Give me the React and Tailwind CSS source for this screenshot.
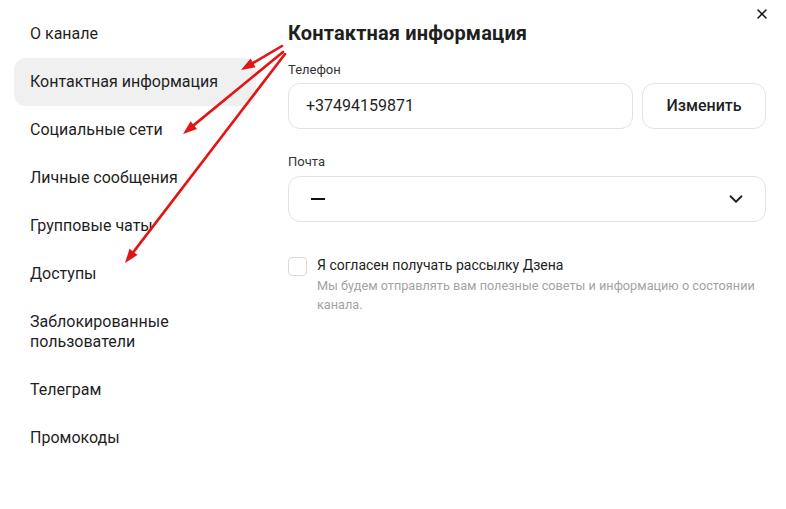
import { X, ChevronDown } from 'lucide-react'

const NAV = [
  'О канале',
  'Контактная информация',
  'Социальные сети',
  'Личные сообщения',
  'Групповые чаты',
  'Доступы',
  'Заблокированные пользователи',
  'Телеграм',
  'Промокоды',
]

const ACTIVE = 'Контактная информация'

// annotation arrows drawn over the page: [x1, y1, x2, y2]
const ARROWS = [
  [282, 46, 241, 70],
  [283, 52, 183, 134],
  [285, 54, 125, 263],
]

function Arrow({ x1, y1, x2, y2 }) {
  const a = Math.atan2(y2 - y1, x2 - x1)
  const len = 14
  const w = 5
  const bx = x2 - Math.cos(a) * len
  const by = y2 - Math.sin(a) * len
  const px = -Math.sin(a) * w
  const py = Math.cos(a) * w
  return (
    <g>
      <line x1={x1} y1={y1} x2={bx} y2={by} stroke="#e41414" strokeWidth="2.6" strokeLinecap="round" />
      <polygon points={`${x2},${y2} ${bx + px},${by + py} ${bx - px},${by - py}`} fill="#e41414" />
    </g>
  )
}

export default function App() {
  return (
    <div className="relative w-[786px] h-[509px] bg-white text-[#1f1f1f] overflow-hidden" style={{ fontFamily: 'Roboto, "Noto Sans", sans-serif' }}>
      <div className="flex pt-[10px]">
        {/* Sidebar */}
        <nav className="w-[242px] ml-[14px] flex flex-col flex-shrink-0">
          {NAV.map((label) => (
            <div
              key={label}
              className={`px-4 py-[14px] rounded-xl text-[16px] leading-[20px] ${label === ACTIVE ? 'bg-[#f0f0f0]' : ''}`}
            >
              {label === 'Заблокированные пользователи' ? (
                <>Заблокированные<br />пользователи</>
              ) : label}
            </div>
          ))}
        </nav>

        {/* Content */}
        <div className="ml-[32px] w-[478px] flex flex-col">
          <div className="flex items-start justify-between">
            <h1 className="text-[20px] leading-[26px] font-bold mt-[10px] tracking-[0.15px]">Контактная информация</h1>
            <button className="w-8 h-8 flex items-center justify-center -mt-[12px] -mr-[12px] text-[#111]">
              <X size={16} strokeWidth={2.2} />
            </button>
          </div>

          <label className="text-[13px] leading-[16px] mt-[16px] text-[#333]">Телефон</label>
          <div className="flex gap-[9px] mt-[5px]">
            <div className="flex-1 h-[46px] border border-[#e3e3e3] rounded-xl px-[17px] flex items-center text-[16px]">
              +37494159871
            </div>
            <button className="w-[124px] h-[46px] border border-[#e3e3e3] rounded-xl text-[16px] font-medium">
              Изменить
            </button>
          </div>

          <label className="text-[13px] leading-[16px] mt-[25px] text-[#333]">Почта</label>
          <div className="h-[46px] mt-[6px] border border-[#e3e3e3] rounded-xl pl-[22px] pr-[18px] flex items-center justify-between">
            <span className="block w-[14px] h-[2px] bg-[#111]" />
            <ChevronDown size={22} strokeWidth={2} className="text-[#222]" />
          </div>

          <div className="flex gap-[10px] mt-[34px]">
            <div className="w-[19px] h-[19px] mt-px border border-[#dadada] rounded-[4px] flex-shrink-0" />
            <div className="flex flex-col">
              <span className="text-[14px] leading-[19px] text-[#222]">Я согласен получать рассылку Дзена</span>
              <span className="text-[12.7px] leading-[19px] text-[#a3a3a3] mt-[1px]">
                Мы будем отправлять вам полезные советы и информацию о состоянии канала.
              </span>
            </div>
          </div>
        </div>
      </div>

      <svg className="absolute inset-0 pointer-events-none" width="786" height="509">
        {ARROWS.map(([x1, y1, x2, y2], i) => (
          <Arrow key={i} x1={x1} y1={y1} x2={x2} y2={y2} />
        ))}
      </svg>
    </div>
  )
}
